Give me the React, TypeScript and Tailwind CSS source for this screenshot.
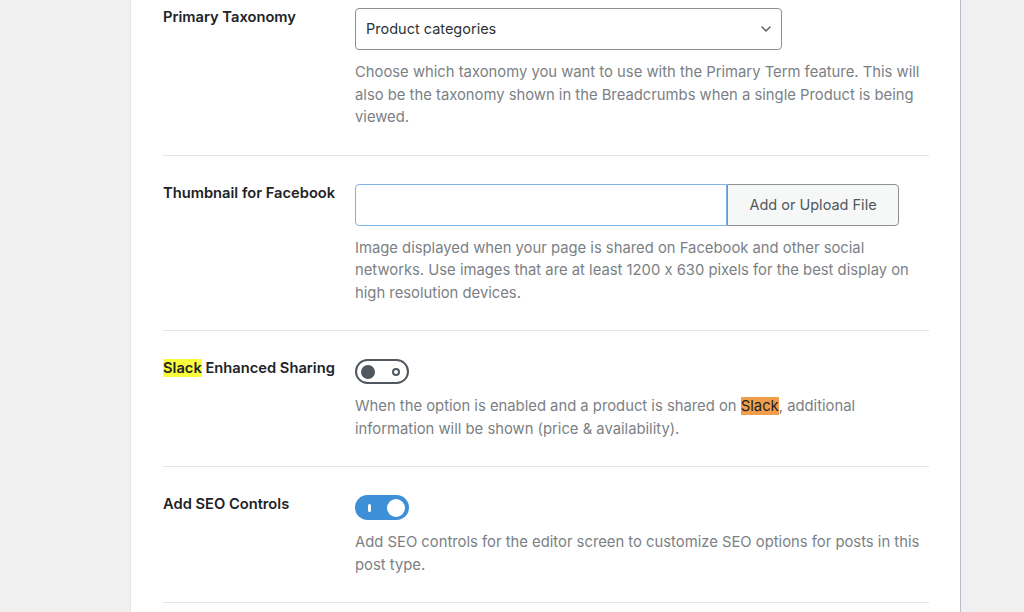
import { ChevronDown } from "lucide-react";

type Row = {
    label: React.ReactNode;
    control: React.ReactNode;
    desc: React.ReactNode;
    first?: boolean;
};

function Toggle({ on }: { on: boolean }) {
    if (on) {
        return (
            <div className="flex items-center justify-between w-[54px] h-[25px] rounded-full bg-[#3d8fd8] pl-[13px] pr-[4px]">
                <span className="w-[3px] h-[8px] rounded-sm bg-white" />
                <span className="w-[18px] h-[18px] rounded-full bg-white" />
            </div>
        );
    }
    return (
        <div className="flex items-center justify-between w-[54px] h-[25px] rounded-full border-2 border-[#50575e] bg-white pl-[4px] pr-[7px]">
            <span className="w-[14px] h-[14px] rounded-full bg-[#50575e]" />
            <span className="w-[8px] h-[8px] rounded-full border-2 border-[#50575e]" />
        </div>
    );
}

function SettingRow({ label, control, desc, first }: Row) {
    return (
        <div className={`flex border-b border-[#e2e4e7] ${first ? "pt-2 pb-[26px]" : "pt-[28px] pb-[26px]"}`}>
            <div className="w-[192px] shrink-0 text-[14.7px] leading-[18px] font-semibold text-[#1d2327]">
                {label}
            </div>
            <div className="flex-1 min-w-0">
                {control}
                <p className="mt-[11px] text-[14.8px] leading-[22.5px] text-[#7b7f85]">{desc}</p>
            </div>
        </div>
    );
}

export default function App() {
    return (
        <div
            className="h-[612px] overflow-hidden bg-[#f0f0f1] [font-feature-settings:'calt'_0]"
            style={{ fontFamily: "Inter, 'Noto Sans', sans-serif" }}
        >
            <div className="ml-[130px] w-[831px] h-full bg-white border-l border-[#e5e5e7] border-r border-r-[#b8bfca] pl-[32px] pr-[31px]">
                <SettingRow
                    first
                    label="Primary Taxonomy"
                    control={
                        <div className="flex items-center justify-between w-[427px] h-[42px] border border-[#8c8f94] rounded-[4px] pl-[10px] pr-[7px] text-[14.5px] text-[#2c3338]">
                            <span>Product categories</span>
                            <ChevronDown className="w-[16px] h-[16px] text-[#50575e]" strokeWidth={2} />
                        </div>
                    }
                    desc="Choose which taxonomy you want to use with the Primary Term feature. This will also be the taxonomy shown in the Breadcrumbs when a single Product is being viewed."
                />
                <SettingRow
                    label="Thumbnail for Facebook"
                    control={
                        <div className="flex h-[42px] w-[544px]">
                            <div className="w-[372px] border border-[#7fb2e5] rounded-l-[4px]" />
                            <button className="flex-1 border border-[#8c8f94] rounded-r-[4px] bg-[#f6f7f7] text-[14.5px] text-[#50575e]">
                                Add or Upload File
                            </button>
                        </div>
                    }
                    desc="Image displayed when your page is shared on Facebook and other social networks. Use images that are at least 1200 x 630 pixels for the best display on high resolution devices."
                />
                <SettingRow
                    label={
                        <>
                            <span className="bg-[#fbff3b]">Slack</span> Enhanced Sharing
                        </>
                    }
                    control={<Toggle on={false} />}
                    desc={
                        <>
                            When the option is enabled and a product is shared on{" "}
                            <span className="bg-[#f29d4b] text-[#1d2327]">Slack</span>, additional information will
                            be shown (price &amp; availability).
                        </>
                    }
                />
                <SettingRow
                    label="Add SEO Controls"
                    control={<Toggle on />}
                    desc="Add SEO controls for the editor screen to customize SEO options for posts in this post type."
                />
            </div>
        </div>
    );
}
